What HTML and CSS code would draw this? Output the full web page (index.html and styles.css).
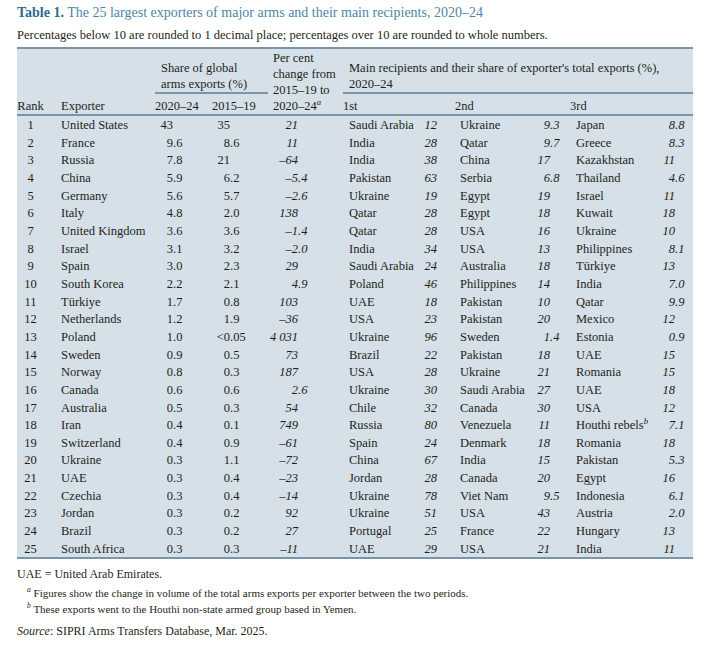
FILE: index.html
```html
<!DOCTYPE html>
<html>
<head>
<meta charset="utf-8">
<link rel="stylesheet" href="styles.css">
</head>
<body>
<div class="page">
<h1 class="title"><b>Table 1.</b> The 25 largest exporters of major arms and their main recipients, 2020–24</h1>
<p class="sub">Percentages below 10 are rounded to 1 decimal place; percentages over 10 are rounded to whole numbers.</p>
<table>
<colgroup>
<col class="c1"><col class="c2"><col class="c3"><col class="c4"><col class="c5"><col class="c6"><col class="c7"><col class="c8"><col class="c9"><col class="c10"><col class="c11">
</colgroup>
<thead>
<tr class="ha">
<th rowspan="2" class="rank">Rank</th>
<th rowspan="2" class="exp">Exporter</th>
<th colspan="2" class="grp share">Share of global<br>arms exports (%)</th>
<th rowspan="2" class="pct">Per cent<br>change from<br>2015–19 to<br>2020–24<sup>a</sup></th>
<th colspan="6" class="grp main">Main recipients and their share of exporter's total exports (%),<br>2020–24</th>
</tr>
<tr class="hb">
<th class="y1">2020–24</th>
<th class="y2">2015–19</th>
<th colspan="2" class="r1">1st</th>
<th colspan="2" class="r2">2nd</th>
<th colspan="2" class="r3">3rd</th>
</tr>
</thead>
<tbody>
<tr><td>1</td><td>United States</td><td><span class="i">43</span></td><td><span class="i">35</span></td><td><span class="i">21</span></td><td>Saudi Arabia</td><td><span class="i">12</span></td><td>Ukraine</td><td><span class="i">9</span>.3</td><td>Japan</td><td><span class="i">8</span>.8</td></tr>
<tr><td>2</td><td>France</td><td><span class="i">9</span>.6</td><td><span class="i">8</span>.6</td><td><span class="i">11</span></td><td>India</td><td><span class="i">28</span></td><td>Qatar</td><td><span class="i">9</span>.7</td><td>Greece</td><td><span class="i">8</span>.3</td></tr>
<tr><td>3</td><td>Russia</td><td><span class="i">7</span>.8</td><td><span class="i">21</span></td><td><span class="i">–64</span></td><td>India</td><td><span class="i">38</span></td><td>China</td><td><span class="i">17</span></td><td>Kazakhstan</td><td><span class="i">11</span></td></tr>
<tr><td>4</td><td>China</td><td><span class="i">5</span>.9</td><td><span class="i">6</span>.2</td><td><span class="i">–5</span>.4</td><td>Pakistan</td><td><span class="i">63</span></td><td>Serbia</td><td><span class="i">6</span>.8</td><td>Thailand</td><td><span class="i">4</span>.6</td></tr>
<tr><td>5</td><td>Germany</td><td><span class="i">5</span>.6</td><td><span class="i">5</span>.7</td><td><span class="i">–2</span>.6</td><td>Ukraine</td><td><span class="i">19</span></td><td>Egypt</td><td><span class="i">19</span></td><td>Israel</td><td><span class="i">11</span></td></tr>
<tr><td>6</td><td>Italy</td><td><span class="i">4</span>.8</td><td><span class="i">2</span>.0</td><td><span class="i">138</span></td><td>Qatar</td><td><span class="i">28</span></td><td>Egypt</td><td><span class="i">18</span></td><td>Kuwait</td><td><span class="i">18</span></td></tr>
<tr><td>7</td><td>United Kingdom</td><td><span class="i">3</span>.6</td><td><span class="i">3</span>.6</td><td><span class="i">–1</span>.4</td><td>Qatar</td><td><span class="i">28</span></td><td>USA</td><td><span class="i">16</span></td><td>Ukraine</td><td><span class="i">10</span></td></tr>
<tr><td>8</td><td>Israel</td><td><span class="i">3</span>.1</td><td><span class="i">3</span>.2</td><td><span class="i">–2</span>.0</td><td>India</td><td><span class="i">34</span></td><td>USA</td><td><span class="i">13</span></td><td>Philippines</td><td><span class="i">8</span>.1</td></tr>
<tr><td>9</td><td>Spain</td><td><span class="i">3</span>.0</td><td><span class="i">2</span>.3</td><td><span class="i">29</span></td><td>Saudi Arabia</td><td><span class="i">24</span></td><td>Australia</td><td><span class="i">18</span></td><td>Türkiye</td><td><span class="i">13</span></td></tr>
<tr><td>10</td><td>South Korea</td><td><span class="i">2</span>.2</td><td><span class="i">2</span>.1</td><td><span class="i">4</span>.9</td><td>Poland</td><td><span class="i">46</span></td><td>Philippines</td><td><span class="i">14</span></td><td>India</td><td><span class="i">7</span>.0</td></tr>
<tr><td>11</td><td>Türkiye</td><td><span class="i">1</span>.7</td><td><span class="i">0</span>.8</td><td><span class="i">103</span></td><td>UAE</td><td><span class="i">18</span></td><td>Pakistan</td><td><span class="i">10</span></td><td>Qatar</td><td><span class="i">9</span>.9</td></tr>
<tr><td>12</td><td>Netherlands</td><td><span class="i">1</span>.2</td><td><span class="i">1</span>.9</td><td><span class="i">–36</span></td><td>USA</td><td><span class="i">23</span></td><td>Pakistan</td><td><span class="i">20</span></td><td>Mexico</td><td><span class="i">12</span></td></tr>
<tr><td>13</td><td>Poland</td><td><span class="i">1</span>.0</td><td><span class="i">&lt;0</span>.05</td><td><span class="i">4 031</span></td><td>Ukraine</td><td><span class="i">96</span></td><td>Sweden</td><td><span class="i">1</span>.4</td><td>Estonia</td><td><span class="i">0</span>.9</td></tr>
<tr><td>14</td><td>Sweden</td><td><span class="i">0</span>.9</td><td><span class="i">0</span>.5</td><td><span class="i">73</span></td><td>Brazil</td><td><span class="i">22</span></td><td>Pakistan</td><td><span class="i">18</span></td><td>UAE</td><td><span class="i">15</span></td></tr>
<tr><td>15</td><td>Norway</td><td><span class="i">0</span>.8</td><td><span class="i">0</span>.3</td><td><span class="i">187</span></td><td>USA</td><td><span class="i">28</span></td><td>Ukraine</td><td><span class="i">21</span></td><td>Romania</td><td><span class="i">15</span></td></tr>
<tr><td>16</td><td>Canada</td><td><span class="i">0</span>.6</td><td><span class="i">0</span>.6</td><td><span class="i">2</span>.6</td><td>Ukraine</td><td><span class="i">30</span></td><td>Saudi Arabia</td><td><span class="i">27</span></td><td>UAE</td><td><span class="i">18</span></td></tr>
<tr><td>17</td><td>Australia</td><td><span class="i">0</span>.5</td><td><span class="i">0</span>.3</td><td><span class="i">54</span></td><td>Chile</td><td><span class="i">32</span></td><td>Canada</td><td><span class="i">30</span></td><td>USA</td><td><span class="i">12</span></td></tr>
<tr><td>18</td><td>Iran</td><td><span class="i">0</span>.4</td><td><span class="i">0</span>.1</td><td><span class="i">749</span></td><td>Russia</td><td><span class="i">80</span></td><td>Venezuela</td><td><span class="i">11</span></td><td>Houthi rebels<sup>b</sup></td><td><span class="i">7</span>.1</td></tr>
<tr><td>19</td><td>Switzerland</td><td><span class="i">0</span>.4</td><td><span class="i">0</span>.9</td><td><span class="i">–61</span></td><td>Spain</td><td><span class="i">24</span></td><td>Denmark</td><td><span class="i">18</span></td><td>Romania</td><td><span class="i">18</span></td></tr>
<tr><td>20</td><td>Ukraine</td><td><span class="i">0</span>.3</td><td><span class="i">1</span>.1</td><td><span class="i">–72</span></td><td>China</td><td><span class="i">67</span></td><td>India</td><td><span class="i">15</span></td><td>Pakistan</td><td><span class="i">5</span>.3</td></tr>
<tr><td>21</td><td>UAE</td><td><span class="i">0</span>.3</td><td><span class="i">0</span>.4</td><td><span class="i">–23</span></td><td>Jordan</td><td><span class="i">28</span></td><td>Canada</td><td><span class="i">20</span></td><td>Egypt</td><td><span class="i">16</span></td></tr>
<tr><td>22</td><td>Czechia</td><td><span class="i">0</span>.3</td><td><span class="i">0</span>.4</td><td><span class="i">–14</span></td><td>Ukraine</td><td><span class="i">78</span></td><td>Viet Nam</td><td><span class="i">9</span>.5</td><td>Indonesia</td><td><span class="i">6</span>.1</td></tr>
<tr><td>23</td><td>Jordan</td><td><span class="i">0</span>.3</td><td><span class="i">0</span>.2</td><td><span class="i">92</span></td><td>Ukraine</td><td><span class="i">51</span></td><td>USA</td><td><span class="i">43</span></td><td>Austria</td><td><span class="i">2</span>.0</td></tr>
<tr><td>24</td><td>Brazil</td><td><span class="i">0</span>.3</td><td><span class="i">0</span>.2</td><td><span class="i">27</span></td><td>Portugal</td><td><span class="i">25</span></td><td>France</td><td><span class="i">22</span></td><td>Hungary</td><td><span class="i">13</span></td></tr>
<tr><td>25</td><td>South Africa</td><td><span class="i">0</span>.3</td><td><span class="i">0</span>.3</td><td><span class="i">–11</span></td><td>UAE</td><td><span class="i">29</span></td><td>USA</td><td><span class="i">21</span></td><td>India</td><td><span class="i">11</span></td></tr>
</tbody>
</table>
<div class="notes">
<p class="abbr">UAE = United Arab Emirates.</p>
<p class="fn"><sup>a</sup> Figures show the change in volume of the total arms exports per exporter between the two periods.</p>
<p class="fn"><sup>b</sup> These exports went to the Houthi non-state armed group based in Yemen.</p>
<p class="src"><i>Source</i>: SIPRI Arms Transfers Database, Mar. 2025.</p>
</div>
</div>
</body>
</html>
```
FILE: styles.css
```css
body {
  margin: 0;
  background: #ffffff;
  color: #231f20;
  font-family: "Liberation Serif", "Times New Roman", serif;
}

.page {
  padding-left: 17px;
  width: 676px;
}

.title {
  margin: 0;
  padding-top: 4px;
  font-size: 14px;
  line-height: 18px;
  font-weight: normal;
  color: #4b86a5;
}

.title b {
  color: #2f6b8b;
}

.sub {
  margin: 5px 0 0;
  font-size: 12.5px;
  line-height: 16px;
}

table {
  margin-top: 4px;
  width: 676px;
  border-collapse: collapse;
  table-layout: fixed;
  background: #d6e0e8;
  font-size: 12.5px;
  border-top: 2px solid #7a95a7;
  border-bottom: 2px solid #7a95a7;
}

.c1 { width: 27px; }
.c2 { width: 111px; }
.c3 { width: 57px; }
.c4 { width: 56px; }
.c5 { width: 75px; }
.c6 { width: 72px; }
.c7 { width: 40px; }
.c8 { width: 75px; }
.c9 { width: 40px; }
.c10 { width: 70px; }
.c11 { width: 53px; }

th, td {
  padding: 0;
  white-space: nowrap;
  text-align: left;
  font-weight: normal;
}

thead {
  border-bottom: 2px solid #7a95a7;
}

thead th {
  vertical-align: bottom;
  line-height: 16px;
}

.ha {
  height: 45px;
}

.ha th {
  padding-bottom: 0;
}

.grp {
  border-bottom: 2px solid #7a95a7;
}

.hb th {
  padding: 4px 0 0;
}

.rank { text-align: center; }
.exp { padding-left: 17px; }
.share { padding-left: 6px; }
.y1 { padding-left: 6px; }
.y2 { padding-left: 5px; }
.pct { padding-left: 5px; }
.pct sup, .fn sup {
  font-style: italic;
  font-size: 0.7em;
  line-height: 0;
}
.main, .r1 { padding-left: 6px; }
.r2 { padding-left: 5px; }
.r3 { padding-left: 6px; }

tbody td {
  padding-top: 1px;
  line-height: 16.65px;
}

tbody td:nth-child(1) { text-align: center; }
tbody td:nth-child(2) { padding-left: 17px; }
tbody td:nth-child(6),
tbody td:nth-child(10) { padding-left: 6px; }
tbody td:nth-child(8) { padding-left: 5px; }

tbody td:nth-child(5),
tbody td:nth-child(7),
tbody td:nth-child(9),
tbody td:nth-child(11) {
  font-style: italic;
}

tbody td sup {
  font-size: 0.7em;
  font-style: italic;
  line-height: 0;
}

.i {
  display: inline-block;
  text-align: right;
}

tbody td:nth-child(3) .i { width: 18px; }
tbody td:nth-child(4) .i { width: 18px; }
tbody td:nth-child(5) .i { width: 30px; }
tbody td:nth-child(7) .i { width: 22px; }
tbody td:nth-child(9) .i { width: 20px; }
tbody td:nth-child(11) .i { width: 35px; }

.notes {
  margin-top: 7px;
  font-size: 12px;
  line-height: 16px;
}

.notes p {
  margin: 0;
}

.fn {
  padding-left: 10px;
  font-size: 11px;
}

.abbr {
  margin-bottom: 3px !important;
}

.src {
  margin-top: 6px !important;
}
```
